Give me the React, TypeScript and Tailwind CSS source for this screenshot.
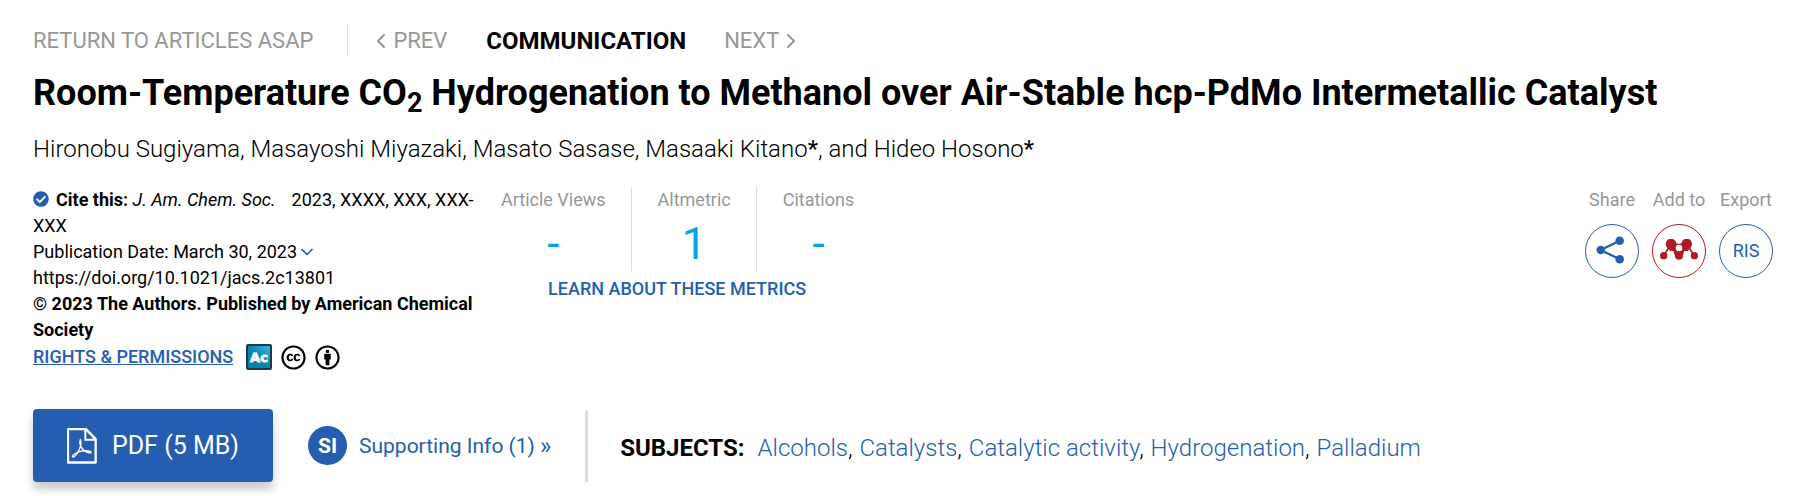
import { ChevronDown, ChevronLeft, ChevronRight } from "lucide-react";
import { FaCheckCircle, FaCreativeCommons, FaCreativeCommonsBy } from "react-icons/fa";
import type { ReactNode } from "react";

const metrics = [
  { label: "Article Views", value: "-" },
  { label: "Altmetric", value: "1" },
  { label: "Citations", value: "-" },
];

const subjects = ["Alcohols", "Catalysts", "Catalytic activity", "Hydrogenation", "Palladium"];

function Tool({ label, red, children }: { label: string; red?: boolean; children: ReactNode }) {
  return (
    <div className="flex flex-col items-center text-[#979797]">
      <span>{label}</span>
      <button
        aria-label={label}
        className={
          red
            ? "mt-[11px] flex h-[54px] w-[54px] items-center justify-center rounded-full border border-[#b01c25] text-[#b01c25]"
            : "mt-[11px] flex h-[54px] w-[54px] items-center justify-center rounded-full border border-[#255eb1] text-[#255eb1]"
        }
      >
        {children}
      </button>
    </div>
  );
}

function ShareIcon() {
  return (
    <svg width="32" height="32" viewBox="0 0 32 32" fill="currentColor" aria-hidden="true">
      <path d="M23.7 5.7 4.7 15l19 9.3" fill="none" stroke="currentColor" strokeWidth="2.3" />
      <circle cx="4.7" cy="15" r="4.2" />
      <circle cx="23.7" cy="5.7" r="4.3" />
      <circle cx="23.7" cy="24.3" r="4.3" />
    </svg>
  );
}

function MendeleyIcon() {
  return (
    <svg width="40" height="24" viewBox="297 202 120 72" fill="currentColor" aria-hidden="true">
      <path d="M333 217 311 252M380 217l23 35" stroke="currentColor" strokeWidth="5" />
      <path d="M333 211c10 0 14 5 24 5s14-5 23-5l8 22-20 22h-22l-20-22z" />
      <circle cx="333" cy="217" r="16" />
      <circle cx="380" cy="217" r="16" />
      <path d="M325 238h15l6 18h-20zM373 238h15l-1 18h-20z" fill="#fff" />
      <circle cx="311" cy="252" r="11" />
      <circle cx="403" cy="252" r="11" />
      <circle cx="357" cy="252" r="12" />
      <circle cx="357" cy="229" r="10" fill="#fff" />
    </svg>
  );
}

function PdfIcon() {
  return (
    <svg width="30" height="36" viewBox="79 45 90 107" fill="none" stroke="currentColor" aria-hidden="true">
      <path d="M82 48h54l29 30v70H82z" strokeWidth="7" strokeLinejoin="round" />
      <path d="M134 49v31h31" strokeWidth="6" />
      <path
        d="M119 79c4 10 2 18-2 27-5 12-13 25-20 26-5-1 1-9 12-14 13-6 28-6 40-3 4 2 2 5-3 4-12-2-21-10-26-20-4-9-3-15-1-20z"
        strokeWidth="4"
        strokeLinejoin="round"
      />
    </svg>
  );
}

/** ACS AuthorChoice badge */
function AuthorChoice() {
  return (
    <svg width="26" height="26" viewBox="0 0 26 26" role="img" aria-label="ACS AuthorChoice">
      <defs>
        <linearGradient id="ac" x1="1" y1="0" x2="0" y2="1">
          <stop offset="0" stopColor="#3fbde3" />
          <stop offset="0.5" stopColor="#0a86b4" />
          <stop offset="1" stopColor="#0678a6" />
        </linearGradient>
      </defs>
      <rect x="1" y="1" width="24" height="24" rx="1" fill="url(#ac)" stroke="#1d3a47" strokeWidth="2" />
      <text
        x="13"
        y="18"
        textAnchor="middle"
        fill="#fff"
        stroke="#fff"
        strokeWidth="0.8"
        fontFamily="'DejaVu Sans', sans-serif"
        fontWeight="700"
        fontSize="13"
      >
        Ac
      </text>
    </svg>
  );
}

function App() {
  return (
    <main className="bg-white pt-[26px] pr-[29px] pb-3 pl-[33px] font-['Roboto',sans-serif] text-lg leading-[26px] text-black">
      <nav className="flex h-[30px] items-center text-[22px] text-[#979797]">
        <a href="#asap">RETURN TO ARTICLES ASAP</a>
        <span className="ml-[34px] h-[30px] w-px bg-[#d6dfe5]" />
        <a href="#prev" className="ml-[21px] flex items-center">
          <ChevronLeft size={24} strokeWidth={2} />
          PREV
        </a>
        <span className="ml-[39px] text-2xl font-bold text-black">COMMUNICATION</span>
        <a href="#next" className="ml-[38px] flex items-center">
          NEXT
          <ChevronRight size={24} strokeWidth={2} />
        </a>
      </nav>

      <h1 className="mt-[15px] text-4xl leading-[44px] font-bold">
        Room-Temperature CO<sub>2</sub> Hydrogenation to Methanol over Air-Stable hcp-PdMo Intermetallic Catalyst
      </h1>
      <p className="mt-[18px] text-2xl leading-8 font-light">
        Hironobu Sugiyama, Masayoshi Miyazaki, Masato Sasase, Masaaki Kitano
        <span className="font-normal">*</span>, and Hideo Hosono<span className="font-normal">*</span>
      </p>

      <section className="mt-[22px] flex items-start">
        <div className="w-[442px]">
          <p>
            <FaCheckCircle className="mr-[7px] mb-1 inline align-middle text-[#255eb1]" size={16} />
            <strong className="font-bold">Cite this: </strong>
            <em className="mr-4">J. Am. Chem. Soc.</em>
            2023, XXXX, XXX, XXX-
            <wbr />
            XXX
          </p>
          <p className="flex items-center">
            Publication Date: March 30, 2023
            <ChevronDown className="text-[#255eb1]" size={20} strokeWidth={2} />
          </p>
          <p>https://doi.org/10.1021/jacs.2c13801</p>
          <p className="font-bold">© 2023 The Authors. Published by American Chemical Society</p>
          <div className="flex h-7 items-center">
            <a href="#rights" className="mr-[13px] font-medium text-[#255eb1] underline">RIGHTS &amp; PERMISSIONS</a>
            <AuthorChoice />
            <FaCreativeCommons className="ml-[9px]" size={25} />
            <FaCreativeCommonsBy className="ml-[9px]" size={25} />
          </div>
        </div>

        <div className="flex flex-col items-center">
          <dl className="flex divide-x divide-[#d6dfe5]">
            {metrics.map((m) => (
              <div key={m.label} className="flex h-[84px] flex-col items-center pr-[25px] pl-[26px]">
                <dt className="text-[#979797]">{m.label}</dt>
                <dd className="mt-[5px] text-[44px] leading-[52px] text-[#06a2e3]">{m.value}</dd>
              </div>
            ))}
          </dl>
          <a href="#metrics" className="mt-[5px] font-medium text-[#255eb1]">LEARN ABOUT THESE METRICS</a>
        </div>

        <div className="ml-auto flex gap-[13px]">
          <Tool label="Share">
            <ShareIcon />
          </Tool>
          <Tool label="Add to" red>
            <MendeleyIcon />
          </Tool>
          <Tool label="Export">RIS</Tool>
        </div>
      </section>

      <section className="mt-[38px] flex items-center">
        <button className="flex h-[73px] w-60 items-center justify-center gap-[15px] rounded bg-[#255eb1] text-[25px] text-white shadow-[0_8px_10px_rgba(0,0,0,0.2)]">
          <PdfIcon />
          PDF (5 MB)
        </button>
        <a href="#si" className="ml-[35px] flex items-center text-[21px] text-[#255eb1]">
          <span className="mr-3 flex h-[39px] w-[39px] items-center justify-center rounded-full bg-[#255eb1] font-bold text-white">
            SI
          </span>
          Supporting Info (1)
          <span className="ml-[5px] text-2xl">»</span>
        </a>
        <span className="ml-[34px] h-[72px] w-[3px] bg-[#d6dfe8]" />
        <p className="ml-8 pt-1 text-2xl font-light">
          <strong className="mr-[13px] font-bold">SUBJECTS:</strong>
          {subjects.map((s, i) => (
            <span key={s}>
              {i > 0 && <span className="mr-px">, </span>}
              <a href="#subject" className="text-[#255eb1]">{s}</a>
            </span>
          ))}
        </p>
      </section>
    </main>
  );
}

export default App;
